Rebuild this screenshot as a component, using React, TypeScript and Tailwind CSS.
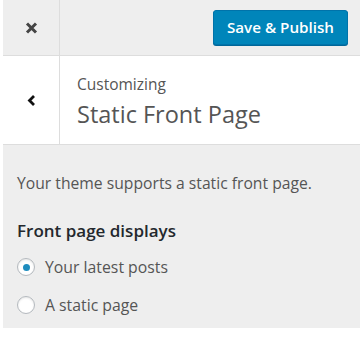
const font = { fontFamily: '"Open Sans", "Noto Sans", sans-serif' };

function Radio({ checked, label }: { checked?: boolean; label: string }) {
  return (
    <label className="flex items-center gap-[10px] h-[38px]">
      <span className="w-[18px] h-[18px] shrink-0 rounded-full border border-[#b4b9be] bg-white shadow-[inset_0_1px_2px_rgba(0,0,0,0.1)] flex items-center justify-center">
        {checked && <span className="w-[7px] h-[7px] rounded-full bg-[#1e8cbe]" />}
      </span>
      <span className="text-[15.8px] text-[#555] leading-[22px]">{label}</span>
    </label>
  );
}

export default function App() {
  return (
    <div className="w-[360px] h-[360px] bg-white pl-[3px]" style={font}>
      {/* Header */}
      <div className="h-[56px] bg-[#eee] border-b border-[#ddd] flex">
        <div className="w-[57px] border-r border-[#ddd] flex items-center justify-center">
          <svg width="13" height="12" viewBox="0 0 13 12" className="text-[#444]">
            <path d="M2 1.5 L11 10.5 M11 1.5 L2 10.5" stroke="currentColor" strokeWidth="3" />
          </svg>
        </div>
        <div className="flex-1 flex items-center justify-end pr-[12px]">
          <button className="h-[35px] px-[13px] rounded-[3px] bg-[#0085ba] border border-[#0073aa] text-white text-[15.2px] font-semibold shadow-[0_1px_0_#006799]">
            Save &amp; Publish
          </button>
        </div>
      </div>

      {/* Section title */}
      <div className="h-[89px] flex border-b border-[#ddd]">
        <div className="w-[57px] border-r border-[#ddd] flex items-center justify-center">
          <svg width="9" height="11" viewBox="0 0 9 11" className="text-[#111]">
            <path d="M7 1 L2.5 5.5 L7 10" fill="none" stroke="currentColor" strokeWidth="2.8" />
          </svg>
        </div>
        <div className="flex-1 pl-[17px] pt-[17px]">
          <div className="text-[15.5px] text-[#555] leading-[22px]">Customizing</div>
          <div className="text-[23.5px] text-[#555] leading-[34px] mt-[2px]">Static Front Page</div>
        </div>
      </div>

      {/* Content */}
      <div className="h-[183px] bg-[#eee] px-[14px] pt-[28px]">
        <p className="text-[15.7px] text-[#555] leading-[20px]">
          Your theme supports a static front page.
        </p>
        <div className="mt-[27px] text-[17px] font-semibold text-[#23282d] leading-[22px]">
          Front page displays
        </div>
        <div className="mt-[6px] flex flex-col">
          <Radio checked label="Your latest posts" />
          <Radio label="A static page" />
        </div>
      </div>
    </div>
  );
}
